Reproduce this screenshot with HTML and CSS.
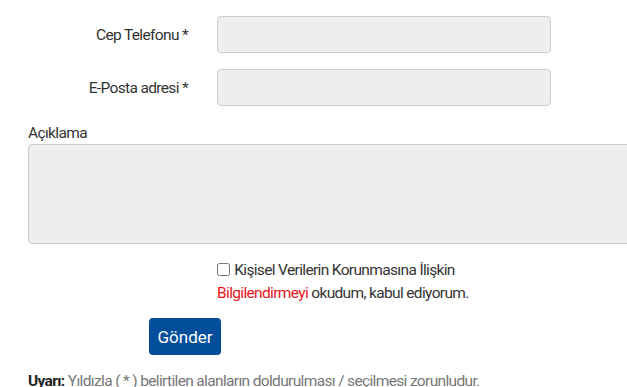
FILE: index.html
```html
<!DOCTYPE html>
<html lang="tr">
<head>
    <meta charset="UTF-8">
    <meta name="viewport" content="width=device-width, initial-scale=1.0">
    <title>İletişim Formu</title>
    <link rel="stylesheet" href="styles.css">
</head>
<body>

<form class="contact-form" action="#" method="POST">
    <div class="form-row form-row-cut">
        <label></label>
        <input type="text" name="name">
    </div>

    <div class="form-row">
        <label for="phone">Cep Telefonu *</label>
        <input type="text" id="phone" name="phone">
    </div>

    <div class="form-row">
        <label for="email">E-Posta adresi *</label>
        <input type="text" id="email" name="email">
    </div>

    <div class="form-block">
        <label for="message" class="block-label">Açıklama</label>
        <textarea id="message" name="message"></textarea>
    </div>

    <div class="consent">
        <label>
            <input type="checkbox" name="kvkk">
            Kişisel Verilerin Korunmasına İlişkin<br>
            <a href="#" class="red-link">Bilgilendirmeyi</a> okudum, kabul ediyorum.
        </label>
    </div>

    <div class="submit-row">
        <button type="submit">Gönder</button>
    </div>

    <p class="warning"><b>Uyarı:</b> Yıldızla ( * ) belirtilen alanların doldurulması / seçilmesi zorunludur.</p>
</form>

</body>
</html>
```

FILE: styles.css
```css
body {
    margin: 0;
    font-family: Roboto, "Liberation Sans", Arial, sans-serif;
    font-size: 15.5px;
    letter-spacing: -0.65px;
    color: #333;
    overflow: hidden;
}
.contact-form {
    padding-left: 28px;
}
.form-row {
    display: grid;
    grid-template-columns: 160px 334px;
    column-gap: 29px;
    align-items: center;
    margin-bottom: 16px;
}
.form-row-cut {
    margin-top: -37px;
}
.form-row label {
    text-align: right;
    color: #333;
}
.form-row input,
.form-block textarea {
    box-sizing: border-box;
    height: 37px;
    background: #eeeeee;
    border: 1px solid #cccccc;
    border-radius: 4px;
    font: inherit;
}
.form-block {
    margin-top: 18px;
}
.block-label {
    display: block;
    line-height: 18px;
    margin-bottom: 2px;
}
.form-block textarea {
    display: block;
    width: 620px;
    height: 100px;
    resize: none;
}
.consent {
    margin: 15px 0 0 189px;
    line-height: 23px;
    color: #333;
}
.consent input {
    width: 13px;
    height: 13px;
    margin: 0 1px 0 0;
    vertical-align: -1px;
}
.red-link {
    color: #e8141c;
    text-decoration: none;
}
.submit-row {
    margin: 13px 0 0 121px;
}
.submit-row button {
    background-color: #034e9b;
    color: white;
    font: inherit;
    font-size: 17px;
    width: 72px;
    height: 37px;
    padding: 0;
    border: none;
    border-radius: 4px;
    cursor: pointer;
}
.warning {
    margin: 17px 0 0;
    color: #777;
    line-height: 18px;
}
.warning b {
    color: #222;
}
```
